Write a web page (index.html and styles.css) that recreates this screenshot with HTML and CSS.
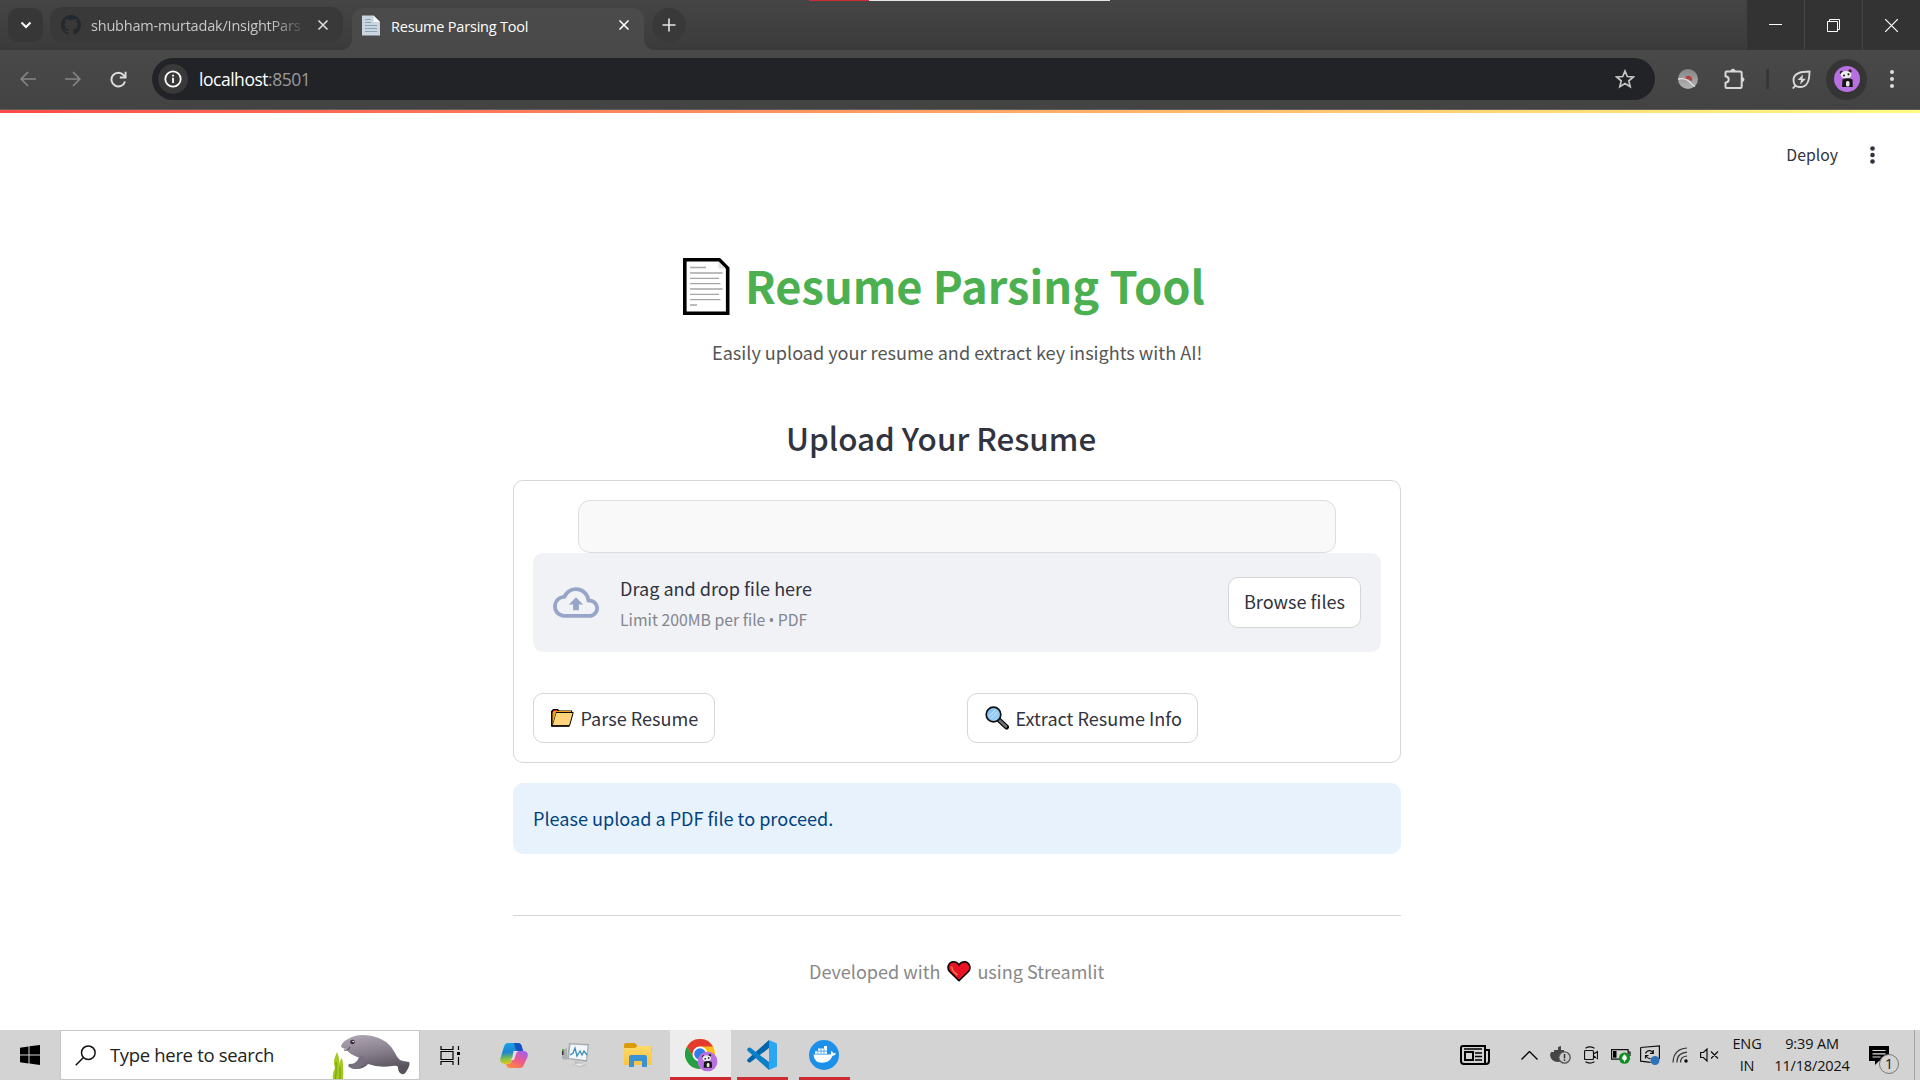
FILE: index.html
```html
<!DOCTYPE html>
<html lang="en">
<head>
<meta charset="utf-8">
<title>Resume Parsing Tool</title>
<link rel="stylesheet" href="styles.css">
</head>
<body>
<svg class="defs" width="0" height="0">
  <defs>
    <linearGradient id="lens" x1="0" y1="0" x2="1" y2="1"><stop offset="0" stop-color="#7cc0f0"/><stop offset="1" stop-color="#a5d4f7"/></linearGradient>
    <linearGradient id="body" x1="0" y1="0" x2="0.3" y2="1"><stop offset="0" stop-color="#b3a9b8"/><stop offset="0.5" stop-color="#8b8290"/><stop offset="1" stop-color="#57525c"/></linearGradient>
    <linearGradient id="cpa" x1="0.2" y1="0" x2="0.3" y2="1"><stop offset="0" stop-color="#1aa2e8"/><stop offset="0.45" stop-color="#1c86cf"/><stop offset="0.75" stop-color="#7fc24a"/><stop offset="1" stop-color="#e9c51e"/></linearGradient>
    <linearGradient id="cpb" x1="0.8" y1="0" x2="0.2" y2="1"><stop offset="0" stop-color="#a45ff0"/><stop offset="0.5" stop-color="#ee5a8c"/><stop offset="1" stop-color="#ff8a3c"/></linearGradient>
    <linearGradient id="fold" x1="0" y1="0" x2="0" y2="1"><stop offset="0" stop-color="#ffd96a"/><stop offset="1" stop-color="#fcc43e"/></linearGradient>
    <linearGradient id="ball" x1="0" y1="0" x2="0" y2="1"><stop offset="0" stop-color="#858585"/><stop offset="1" stop-color="#b5b5b5"/></linearGradient>
    <symbol id="panda" viewBox="0 0 26 26">
      <circle cx="13" cy="13" r="13" fill="#b770e0"/>
      <circle cx="7.500" cy="6.500" r="1.700" fill="#222"/><circle cx="16" cy="5" r="1.700" fill="#222"/>
      <ellipse cx="12" cy="8.800" rx="5.400" ry="3.900" fill="#ececec"/>
      <circle cx="10" cy="9.500" r="1.100" fill="#222"/><circle cx="14.500" cy="8.300" r="1.100" fill="#222"/>
      <path d="M8.500 13.500q5-2.500 10 0l.3 7.500H8z" fill="#161616"/>
      <rect x="12" y="15" width="3.500" height="5.500" rx="1.500" fill="#e8e8e8"/>
    </symbol>
  </defs>
</svg>

<header class="tabstrip">
  <div class="top-progress"></div>
  <button class="tab-search"><svg width="12" height="8" viewBox="0 0 12 8"><path d="M1.500 1.500L6 6l4.500-4.500" fill="none" stroke="#fff" stroke-width="2"/></svg></button>
  <div class="tab tab-idle">
    <svg width="20" height="20" viewBox="0 0 16 16"><path fill="#24292e" d="M8 0C3.580 0 0 3.580 0 8c0 3.540 2.290 6.530 5.470 7.590.4.070.55-.17.55-.38 0-.19-.01-.82-.01-1.490-2.010.37-2.530-.49-2.690-.94-.09-.23-.48-.94-.82-1.130-.28-.15-.68-.52-.01-.53.63-.01 1.080.58 1.230.82.72 1.210 1.870.87 2.330.66.07-.52.28-.87.51-1.070-1.780-.2-3.640-.89-3.640-3.950 0-.87.31-1.590.82-2.150-.08-.2-.36-1.020.08-2.120 0 0 .67-.21 2.200.82a7.600 7.600 0 0 1 4 0c1.530-1.040 2.200-.82 2.200-.82.44 1.100.16 1.920.08 2.120.51.56.82 1.270.82 2.150 0 3.070-1.870 3.750-3.650 3.950.29.25.54.73.54 1.480 0 1.070-.01 1.930-.01 2.200 0 .21.15.46.55.38A8.010 8.010 0 0 0 16 8c0-4.420-3.580-8-8-8z"/></svg>
    <span class="tab-title">shubham-murtadak/InsightPars</span>
    <svg class="tab-close" width="12" height="12" viewBox="0 0 12 12"><path d="M1.500 1.500l9 9M10.500 1.500l-9 9" stroke="#ddd" stroke-width="1.600"/></svg>
  </div>
  <div class="tab tab-active">
    <svg width="18" height="21" viewBox="0 0 18 21"><path d="M0 .5h11.500L18 7v13.500H0z" fill="#c9d5e0"/><path d="M11.500.5V7H18z" fill="#f4f8fb"/><path d="M3 4.500h6M3 7.500h6M3 10.500h12M3 13.500h12M3 16.500h12" stroke="#8fa2b3" stroke-width="1.200"/></svg>
    <span class="tab-title">Resume Parsing Tool</span>
    <svg class="tab-close" width="12" height="12" viewBox="0 0 12 12"><path d="M1.500 1.500l9 9M10.500 1.500l-9 9" stroke="#fff" stroke-width="1.600"/></svg>
  </div>
  <button class="new-tab"><svg width="14" height="14" viewBox="0 0 14 14"><path d="M7 .5v13M.5 7h13" stroke="#e6e6e6" stroke-width="1.600"/></svg></button>
  <div class="window-controls">
    <span><svg width="13" height="13" viewBox="0 0 13 13"><path d="M0 5.500h13" stroke="#fff"/></svg></span>
    <span><svg width="13" height="13" viewBox="0 0 13 13"><path d="M.5 2.500h10v10H.5zM2.500 2.500v-2h10v10h-2" fill="none" stroke="#fff"/></svg></span>
    <span><svg width="13" height="13" viewBox="0 0 13 13"><path d="M0 0l13 13M13 0L0 13" stroke="#fff" stroke-width="1.200"/></svg></span>
  </div>
</header>

<nav class="toolbar">
  <svg class="nav-back" width="16" height="16" viewBox="0 0 16 16"><path d="M8 1L1.200 8 8 15M1.500 8H16" fill="none" stroke="#858585" stroke-width="1.700"/></svg>
  <svg class="nav-next" width="16" height="16" viewBox="0 0 16 16"><path d="M8 1l6.800 7L8 15M14.500 8H0" fill="none" stroke="#858585" stroke-width="1.700"/></svg>
  <svg class="nav-reload" width="17" height="17" viewBox="0 0 17 17"><path d="M15 10.500A6.900 6.900 0 1 1 13.800 4.300L15.500 6.500" fill="none" stroke="#ddd" stroke-width="2"/><path d="M16.500.8v6.700H9.800V5.600h4.800V.8z" fill="#ddd"/></svg>
  <div class="omnibox">
    <span class="site-info"><svg width="18" height="18" viewBox="0 0 18 18"><circle cx="9" cy="9" r="7.700" fill="none" stroke="#fff" stroke-width="1.800"/><path d="M9 7.800v5.200M9 4.700v1.900" stroke="#fff" stroke-width="1.800"/></svg></span>
    <span class="url">localhost<span class="port">:8501</span></span>
    <svg class="star" width="20" height="20" viewBox="0 0 20 20"><path d="M10 2l2.300 5.500 6 .5-4.500 3.900 1.400 5.800L10 14.600l-5.200 3.100 1.400-5.800L1.700 8l6-.5z" fill="none" stroke="#c7c7c7" stroke-width="1.700"/></svg>
  </div>
  <svg class="ext" width="20" height="20" viewBox="0 0 20 20"><circle cx="10" cy="10" r="10" fill="url(#ball)"/><path d="M7 9.500a3.600 3.600 0 1 1 6.500 2.800q-3-2.500-6.500-2.800z" fill="#b9413d"/><path d="M0 10q7-1.500 10.500 2T17 17.500" fill="none" stroke="#e2e2e2" stroke-width="1.300"/></svg>
  <svg class="puzzle" width="22" height="22" viewBox="0 0 22 22"><path d="M2.500 4.800Q2.500 3.500 3.700 3.500H17q1.700 0 1.700 1.700v13q0 1.800-1.700 1.800H3.700q-1.200 0-1.200-1.200v-4q3.200-.5 3.200-3.300T2.500 8.300z" fill="none" stroke="#d8d8d8" stroke-width="2"/><path d="M7.500 3.300a2.500 2.500 0 0 1 5 0zM19 9a2.500 2.500 0 0 1 0 5z" fill="#d8d8d8"/></svg>
  <span class="tool-sep"></span>
  <svg class="leaf" width="19" height="19" viewBox="0 0 19 19"><path d="M17.500 1.500C8 1.500 1.500 3.500 1.500 10q0 7 6.500 7c7 0 9.500-5 9.500-15.500z" fill="none" stroke="#d8d8d8" stroke-width="1.900"/><path d="M.8 18.500L4 14.800" stroke="#d8d8d8" stroke-width="1.900"/><path d="M11 4.500L5.500 10H9l-1 4.500L14 8.800h-3.500z" fill="#d8d8d8"/></svg>
  <span class="avatar"><svg width="26" height="26"><use href="#panda"/></svg></span>
  <svg class="menu" width="4" height="18" viewBox="0 0 4 18"><g fill="#ddd"><circle cx="2" cy="2" r="2"/><circle cx="2" cy="9" r="2"/><circle cx="2" cy="16" r="2"/></g></svg>
</nav>

<main class="app">
  <div class="decoration"></div>
  <div class="app-header">
    <span class="deploy">Deploy</span>
    <svg width="5" height="18" viewBox="0 0 5 18"><g fill="#31333f"><circle cx="2.500" cy="2.500" r="2.300"/><circle cx="2.500" cy="9" r="2.300"/><circle cx="2.500" cy="15.500" r="2.300"/></g></svg>
  </div>
  <section class="content">
    <h1 class="title">
      <svg width="47" height="57" viewBox="0 0 47 57"><path d="M1.800 1.800h34.500l8.400 8.500v44.900H1.800z" fill="#fff" stroke="#000" stroke-width="3.600"/><path d="M35.500 3.500v7h7.400z" fill="#e4e4e4"/><path d="M7 9.500h16M7 15h32.500M7 20.300h29M7 25.600h30.500M7 31h32.500M7 36.300h29M7 41.700h30.500M7 47h7" stroke="#a6a6a6" stroke-width="1.300"/></svg>
      <span>Resume Parsing Tool</span>
    </h1>
    <p class="subtitle">Easily upload your resume and extract key insights with AI!</p>
    <h2 class="heading">Upload Your Resume</h2>
    <div class="form">
      <div class="upload-box"></div>
      <div class="dropzone">
        <svg width="46" height="31" viewBox="0 0 24 16"><path fill="#97a6c8" d="M19.350 6.040A7.490 7.490 0 0 0 12 0C9.110 0 6.600 1.640 5.350 4.040A5.994 5.994 0 0 0 0 10c0 3.310 2.690 6 6 6h13c2.760 0 5-2.240 5-5 0-2.640-2.050-4.780-4.650-4.960zM19 14H6c-2.210 0-4-1.790-4-4 0-2.050 1.530-3.760 3.560-3.970l1.070-.11.5-.95A5.469 5.469 0 0 1 12 2c2.620 0 4.880 1.860 5.390 4.430l.3 1.500 1.530.11A2.980 2.980 0 0 1 22 11c0 1.650-1.350 3-3 3z"/><path fill="#97a6c8" d="M8.300 9h2.200v3h3V9h2.200L12 5.200z"/></svg>
        <div class="drop-text"><span class="drop-title">Drag and drop file here</span><span class="drop-limit">Limit 200MB per file <span class="bullet">•</span> PDF</span></div>
        <button class="btn browse"><span>Browse files</span></button>
      </div>
      <div class="actions">
        <div><button class="btn"><svg width="23" height="18" viewBox="0 0 23 18"><path d="M1 17V2l1.500-1.500h4L8 2h12.500v2" fill="#e81224" stroke="#000" stroke-width="1.200"/><path d="M1 17V4l2-2h17v3z" fill="#f2a117"/><path d="M1 17L5 3.500h17.200L18.500 16.800z" fill="#ffd37a" stroke="#000" stroke-width="1"/><path d="M1 17V3.500L5 3.500z" fill="#f2a117"/><path d="M.8 2v15h17.500" fill="none" stroke="#000" stroke-width="1.400"/></svg><span class="parse">Parse Resume</span></button></div>
        <div><button class="btn"><svg width="24" height="24" viewBox="0 0 24 24"><path d="M14 14l7.500 7" stroke="#000" stroke-width="5" stroke-linecap="round"/><path d="M14.500 14.500l6.500 6" stroke="#6d7377" stroke-width="2.600" stroke-linecap="round"/><circle cx="8.500" cy="8.500" r="7.300" fill="url(#lens)" stroke="#111" stroke-width="1.700"/><path d="M4 10.500L10.500 3.500M6 12.500l6-6.500" stroke="#cbe7fb" stroke-width="1"/></svg><span class="extract">Extract Resume Info</span></button></div>
      </div>
    </div>
    <div class="alert"><span>Please upload a PDF file to proceed.</span></div>
    <footer class="credits"><span class="credit-a">Developed with</span><svg width="24" height="21" viewBox="0 0 24 21"><path d="M12 19.800L2.500 10.500C-.8 6.500 2 .8 6.500.8 9.500.8 11 2.200 12 4 13 2.200 14.500.8 17.500.8 22 .8 24.800 6.500 21.500 10.500z" fill="#e81224" stroke="#000" stroke-width="1.500"/><path d="M4.500 5.500q.5 5 6 8.500" fill="none" stroke="#f3704f" stroke-width="1.800"/></svg><span class="credit-b">using Streamlit</span></footer>
  </section>
</main>

<div class="taskbar">
  <span class="start"><svg width="20" height="20" viewBox="0 0 20 20"><path d="M0 2.700l8.500-1.200v8H0zM9.500 1.300L20 0v9.500H9.500zM0 10.500h8.500v8L0 17.300zM9.500 10.500H20V20L9.500 18.600z"/></svg></span>
  <div class="search">
    <svg width="21" height="21" viewBox="0 0 21 21"><circle cx="13.300" cy="7.700" r="6.800" fill="none" stroke="#111" stroke-width="1.500"/><path d="M8.500 12.500L.7 20.300" stroke="#111" stroke-width="1.500"/></svg>
    <span class="search-text">Type here to search</span>
    <svg class="manatee" width="78" height="46" viewBox="0 0 78 46"><path d="M1 46q-1-7 2-12-2-6 0-11l2-5q3 6 2 14 1-7 3-8 2 8 1 22z" fill="#a3c91f"/><path d="M3.500 46q1-8 .5-18M8 46V33" stroke="#6f9c18" fill="none"/><path d="M9 12Q11 7 16 5 25-1 40 2 56 5 63 19q3 7 8 8l6 1q2 2-3 10-2 3-4 2-4-1-4-7-1-2-6-1Q47 34 36 30q-4 5-12 5-5 0-8-3l1-2q8 0 11-6-10-3-14-9-5-1-5-3z" fill="url(#body)"/><path d="M17 31q8-1 10-8 4-2 7 1-1 8-10 11-5 0-7-4z" fill="#77707d"/><circle cx="20.500" cy="8" r="2.300" fill="#3a2f36"/><circle cx="21.200" cy="7.500" r=".8" fill="#fff"/><path d="M12 16q5 1 6-3" fill="none" stroke="#4d4853"/></svg>
  </div>
  <svg class="tb-view" width="20" height="19" viewBox="0 0 20 19"><path d="M1 0v3.500h12V0M1 19v-3.500h12V19M1 5.500h12v8H1zM18.500 0v4M18.500 11v8" fill="none" stroke="#000" stroke-width="1.200"/><path d="M17 6h3v3h-3z"/></svg>
  <svg class="tb-copilot" width="28" height="27" viewBox="0 0 28 27"><path d="M8 1h10q3 0 4 4l1 4h-5q-3 0-4 4l-2 6q-1 3-4 3H4q-5-1-3.500-6L4 4.500Q5 1 8 1z" fill="url(#cpa)"/><path d="M14 1h4q3 0 4 4l1 4h-5q-2 0-3-4z" fill="#1552c2"/><path d="M20 26H10q-3 0-4-4h2q3 0 4-3l2-6q1-4 4-4h6q5 1 3.500 6L24 22.500q-1 3.500-4 3.500z" fill="url(#cpb)"/><path d="M13.500 9h5q-2 1-2.500 3l-2 6H10q2-1 2.500-3z" fill="#e8dcec"/></svg>
  <svg class="tb-monitor" width="28" height="26" viewBox="0 0 28 26"><path d="M1 8l5-2v12l-5-1z" fill="#aeb1b3"/><path d="M1 7h2v2H1z" fill="#58b52d"/><path d="M1 9h1.500v4H1z" fill="#333"/><path d="M8 1l20 1-2 18-20-3z" fill="#a9adaf"/><path d="M9.500 2.500l17 1-1.500 14.500-17-2z" fill="#f1f7fb"/><path d="M9 13l3-2 2-5 2 8 3-5 2 4 2-4 3 4" fill="none" stroke="#3f8db5" stroke-width="1.300"/><path d="M13 19l7 1v1.500l6 1.500-6 2.500-9-2.500 3-1.500z" fill="#bfc2c4"/><path d="M13 22.500l6 1.500 4-1.200-5-1.300z" fill="#e6e7e8"/></svg>
  <svg class="tb-folder" width="28" height="24" viewBox="0 0 28 24"><path d="M0 2q0-2 2-2h9l2.500 3H26q1.500 0 1.500 2v5H0z" fill="#dd9a08"/><path d="M0 5h11l2.500-2H26q1.500 0 1.500 1.500V22H0z" fill="url(#fold)"/><path d="M5 24V14q0-2 2-2h14q2 0 2 2v10h-5v-6h-8v6z" fill="#3b93d3"/></svg>
  <span class="task task-chrome"><svg width="33" height="33" viewBox="0 0 33 33"><circle cx="15" cy="15" r="15" fill="#fbc116"/><path d="M2 7.500A15 15 0 0 1 28 7.500H15l-6.500 11z" fill="#e33b2e"/><path d="M2 7.500A15 15 0 0 0 15 30l6.500-11.200H8.500z" fill="#22a045"/><circle cx="15" cy="15" r="7.500" fill="#fff"/><circle cx="15" cy="15" r="5.800" fill="#2f7de9"/><use href="#panda" x="12.500" y="12.500" width="20" height="20"/></svg></span>
  <span class="task task-code"><svg width="30" height="30" viewBox="0 0 30 30"><path d="M22 0v8L3.500 22.300Q2 23 .8 21.800-.5 20.500.8 19z" fill="#0065a9"/><path d="M22 30v-8L3.500 7.700Q2 7 .8 8.200-.5 9.500.8 11z" fill="#0a7fc8"/><path d="M22 0l8 3.500v23L22 30z" fill="#2aa6f2"/></svg></span>
  <span class="task task-docker"><svg width="30" height="30" viewBox="0 0 30 30"><circle cx="15" cy="15" r="15" fill="#1d91ea"/><path d="M4.500 14.500h17q1-1 .5-3.500 2 .5 2.300 2.200 1.700-.3 2.700.5-1 2-3.500 2-2.500 7-10.500 7-8 0-8.500-8.200z" fill="#fff"/><path d="M6 11.200h12v2.600H6zM9 8.500h9v2.500H9zM15 6h3v2.500h-3z" fill="#fff"/><path d="M8.900 11v3M12 8.500V14M15 8.500V14M9 11h9" stroke="#1d91ea" stroke-width=".6"/></svg></span>
  <div class="tray">
    <svg class="tr-news" width="30" height="20" viewBox="0 0 30 20"><path d="M3 1h22v18H4q-3 0-3-3V3q0-2 2-2zM25 5h4v11q0 3-3 3h-3" fill="none" stroke="#000" stroke-width="2"/><path d="M5 7h8v8H5z" fill="none" stroke="#000" stroke-width="2"/><path d="M4 4h18M15 8h7M15 11.500h7M15 15h7" stroke="#000" stroke-width="1.500"/></svg>
    <svg class="tr-up" width="17" height="9" viewBox="0 0 17 9"><path d="M.5 8.500l8-8 8 8" fill="none" stroke="#000" stroke-width="1.300"/></svg>
    <svg class="tr-whale" width="21" height="18" viewBox="0 0 21 18"><path d="M0 9l1-3h3V4h4V1l3-1v4h3v3l4 1q-3 8-10 8-7 0-8-7z" fill="#454545"/><circle cx="14.500" cy="11.500" r="5.700" fill="#c9c9c9" stroke="#555" stroke-width="1.300"/><path d="M14.500 8v4.500M14.500 13.500v1.500" stroke="#333" stroke-width="1.500"/></svg>
    <svg class="tr-cam" width="14" height="18" viewBox="0 0 14 18"><path d="M1.500 4.500h7q1 0 1 1v7q0 1-1 1h-7q-1 0-1-1v-7q0-1 1-1zM9.500 8l4-2.500v7l-4-2.500M1.500 2.200q4-2.500 9 0M1.500 15.800q4 2.500 9 0" fill="none" stroke="#111" stroke-width="1.200"/></svg>
    <svg class="tr-batt" width="20" height="18" viewBox="0 0 20 18"><path d="M.6 3.600h16.500v9.500H.6zM17.500 6h1.500v4" fill="none" stroke="#111" stroke-width="1.200"/><path d="M2 5h3.500v6.700H2z"/><circle cx="13.500" cy="12.200" r="5.600" fill="#0e8f22"/><path d="M13.500 8.700q3 2.500 1.500 5h-3q-1.500-2.500 1.500-5zM13.500 11v5" fill="#fff" stroke="#fff" stroke-width=".8"/></svg>
    <svg class="tr-sync" width="20" height="20" viewBox="0 0 20 20"><path d="M.6 2.500L19.400.8V14M.6 2.500v13.700l10 1.200" fill="none" stroke="#111" stroke-width="1.200"/><path d="M5.500 8.500q1.500-3 4.500-2.800 2 .3 3 2M13.300 5v3.300H10M5.500 13.500v-3h3M6 11q2 3 4.500 2.500" fill="none" stroke="#111" stroke-width="1.200"/><circle cx="15" cy="15.500" r="4.500" fill="#2f72ba"/></svg>
    <svg class="tr-wifi" width="16" height="16" viewBox="0 0 16 16"><circle cx="14" cy="14" r="1.700"/><path d="M8.500 15.500q0-6 6.500-6.500M4.800 15.500Q5 6 15 5.200M1 15.500Q1.500 2 15 1" fill="none" stroke="#333" stroke-width="1.200"/></svg>
    <svg class="tr-mute" width="19" height="14" viewBox="0 0 19 14"><path d="M.6 4.500h2.800L7 1v12L3.400 9.500H.6zM11 3.500l7 7M18 3.500l-7 7" fill="none" stroke="#111" stroke-width="1.200"/></svg>
    <div class="lang"><span>ENG</span><span>IN</span></div>
    <div class="clock"><span>9:39 AM</span><span>11/18/2024</span></div>
    <span class="notify"><svg width="20" height="19" viewBox="0 0 20 19"><path d="M0 0h20v15H10l-4 4v-4H0z"/><path d="M3.500 4.500h13M3.500 7.800h13M3.500 11h8" stroke="#ddd" stroke-width="1.200"/></svg><b class="badge">1</b></span>
    <span class="peek"></span>
  </div>
</div>
</body>
</html>
```
FILE: styles.css
```css
* { box-sizing: border-box; }
body {
  margin: 0; width: 1920px; height: 1080px; overflow: hidden;
  display: flex; flex-direction: column; background: #fff;
  font-family: "Noto Sans CJK SC", "Open Sans", sans-serif;
}
.defs { position: absolute; }
svg { display: block; flex: none; }
span, p, h1, h2 { white-space: nowrap; }
button { border: 0; padding: 0; font: inherit; background: none; }

/* browser chrome */
.tabstrip {
  position: relative; height: 50px; flex: none; display: flex; align-items: flex-start;
  background: linear-gradient(#454545, #3b3b3b);
  font-family: "Open Sans", sans-serif; font-size: 14.500px;
}
.top-progress { position: absolute; left: 809px; top: 0; width: 301px; height: 1px; background: linear-gradient(90deg, #cc2b2f 60px, #e5e5e5 60px); }
.tab-search { margin: 8px 0 0 8px; width: 35px; height: 34px; border-radius: 11px; background: #373737; display: grid; place-items: center; }
.tab { display: flex; align-items: center; }
.tab-title { padding-top: 2px; }
.tab-idle { margin: 7px 0 0 7px; width: 293px; height: 35px; border-radius: 12px; background: #393939; padding-left: 11px; color: #c8c8c8; }
.tab-idle .tab-title { margin-left: 10px; width: 212px; letter-spacing: -.2px; -webkit-mask-image: linear-gradient(90deg, #000 180px, transparent 216px); mask-image: linear-gradient(90deg, #000 180px, transparent 216px); }
.tab-idle .tab-close { margin-left: 14px; }
.tab-active { position: relative; margin: 8px 0 0 9px; width: 292px; height: 42px; border-radius: 12px 12px 0 0; background: linear-gradient(#4b4b4b, #494949); padding: 0 0 8px 10px; color: #fff; }
.tab-active::before, .tab-active::after { content: ""; position: absolute; bottom: 0; width: 10px; height: 10px; }
.tab-active::before { left: -10px; background: radial-gradient(circle at 0 0, transparent 9.500px, #494949 10px); }
.tab-active::after { right: -10px; background: radial-gradient(circle at 100% 0, transparent 9.500px, #494949 10px); }
.tab-active .tab-title { margin-left: 11px; width: 227px; letter-spacing: -.2px; }
.new-tab { margin: 8px 0 0 8px; width: 34px; height: 34px; border-radius: 50%; background: #393939; display: grid; place-items: center; }
.window-controls { margin-left: auto; display: flex; gap: 1px; height: 50px; width: 173px; background: #454545; }
.window-controls span { flex: 1; background: #333; display: grid; place-items: center; }

.toolbar { height: 60px; flex: none; display: flex; align-items: center; padding-bottom: 1px; background: linear-gradient(#494949, #434343); border-bottom: 1px solid #5c5c5c; font-family: "Open Sans", sans-serif; }
.nav-back { margin-left: 20px; }
.nav-next { margin-left: 29px; }
.nav-reload { margin-left: 29px; }
.omnibox { margin-left: 25px; width: 1503px; height: 42px; border-radius: 21px; background: #222327; display: flex; align-items: center; padding-left: 6px; }
.site-info { width: 30px; height: 30px; border-radius: 50%; background: #393939; display: grid; place-items: center; }
.url { margin-left: 11px; font-size: 17.500px; letter-spacing: -.47px; color: #fff; flex: 1; }
.port { color: #9a9a9a; }
.star { margin-right: 20px; }
.ext { margin-left: 23px; }
.puzzle { margin-left: 25px; }
.tool-sep { margin-left: 21px; width: 3px; height: 20px; background: #373737; }
.leaf { margin-left: 23px; }
.avatar { margin-left: 15px; width: 41px; height: 41px; border-radius: 50%; background: #353535; display: grid; place-items: center; }
.menu { margin-left: 23px; }

/* app */
.app { flex: 1; display: flex; flex-direction: column; color: #31333f; }
.decoration { height: 3px; background: linear-gradient(90deg, #ff4b4b, #fffd80); }
.app-header { height: 84px; display: flex; align-items: center; justify-content: flex-end; padding-right: 45px; gap: 32px; }
.deploy { font-size: 15.800px; padding-bottom: 1px; }
.content { width: 888px; margin: 0 auto; transform: translateX(-3px); display: flex; flex-direction: column; }
.title { margin: 61px 0 0 170px; height: 57px; display: flex; align-items: center; gap: 15px; font-size: 45.200px; font-weight: 700; color: #4caf50; line-height: 57px; }
.title span { padding-bottom: 5px; }
.subtitle { margin: 21px 0 0 199px; font-size: 18.080px; line-height: 32px; color: #555; }
.heading { margin: 45px 0 0 273px; font-size: 31.400px; line-height: 50px; font-weight: 500; }
.form { margin-top: 17px; height: 283px; border: 1px solid #d6d6d9; border-radius: 10px; padding: 19px; }
.upload-box { margin: 0 auto; width: 758px; height: 53px; border: 1px solid #ddd; border-radius: 12px; background: #f9f9f9; }
.dropzone { height: 99px; border-radius: 10px; background: #f0f2f6; display: flex; align-items: center; padding: 0 20px; }
.drop-text { margin-left: 21px; padding-top: 3px; flex: 1; display: flex; flex-direction: column; }
.drop-title { font-size: 18.080px; line-height: 32px; }
.drop-limit { font-size: 15.800px; line-height: 32px; color: #84868e; }
.bullet { font-family: "Open Sans", sans-serif; font-size: 15.500px; line-height: 1; margin: 0 -.3px; }
.btn { height: 50px; border: 1px solid #d6d6d9; border-radius: 10px; background: #fff; color: #31333f; font-size: 18.080px; line-height: 48px; padding: 0 15.500px 1px 17px; display: flex; align-items: center; gap: 6.500px; }
.browse { height: 51px; padding: 0 15px 3px; }
.actions { margin-top: 41px; display: grid; grid-template-columns: 1fr 1fr; gap: 20px; }
.actions .btn { width: fit-content; }
.alert { margin-top: 20px; height: 71px; border-radius: 10px; background: #e8f2fc; color: #004280; padding: 0 0 1px 20px; display: flex; align-items: center; font-size: 18.080px; }
.credits { margin-top: 61px; border-top: 1px solid #d6d6d9; padding: 39px 0 0 296px; display: flex; align-items: center; font-size: 18.050px; line-height: 32px; color: #888; }
.credit-a { margin-right: 7px; }
.credit-b { margin-left: 6px; }
.credits svg { margin-top: 1px; }

/* taskbar */
.taskbar { height: 50px; flex: none; background: #d3d3d3; display: flex; align-items: center; font-family: "Open Sans", sans-serif; color: #111; }
.start { width: 60px; display: grid; place-items: center; }
.search { width: 360px; height: 50px; background: #fff; border: 1px solid #c6c6c6; display: flex; align-items: center; padding-left: 14px; overflow: hidden; }
.search-text { margin-left: 14px; padding-bottom: 2px; font-size: 18.500px; width: 222px; color: #222; letter-spacing: -.33px; }
.manatee { margin-top: 4px; }
.tb-view { margin-left: 20px; }
.tb-copilot { margin-left: 40px; }
.tb-monitor { margin-left: 33px; }
.tb-folder { margin-left: 35px; }
.task { height: 50px; border-bottom: 3px solid #cc2b30; display: grid; place-items: center; padding-top: 2px; }
.task-chrome { margin-left: 18px; width: 61px; background: #ededed; padding: 4px 0 0 2px; }
.task-code { margin-left: 6px; width: 51px; padding-right: 1px; }
.task-docker { margin-left: 11px; width: 51px; padding-right: 2px; }
.tray { margin-left: auto; height: 50px; display: flex; align-items: center; }
.tr-up { margin-left: 31px; }
.tr-whale { margin-left: 12px; }
.tr-cam { margin-left: 13px; }
.tr-batt { margin-left: 13px; }
.tr-sync { margin-left: 9px; }
.tr-wifi { margin-left: 12px; }
.tr-mute { margin-left: 12px; }
.lang, .clock { display: flex; flex-direction: column; align-items: center; font-size: 14.500px; line-height: 22.500px; letter-spacing: -.15px; }
.lang { margin-left: 12px; width: 32px; }
.clock { margin-left: 10px; width: 78px; }
.notify { margin-left: 18px; width: 30px; position: relative; }
.badge { position: absolute; left: 10px; top: 8px; width: 20px; height: 20px; border: 1px solid #777; border-radius: 50%; background: #d3d3d3; font-size: 14px; line-height: 18px; text-align: center; font-weight: 400; }
.peek { margin-left: 15px; width: 6px; height: 50px; border-left: 1px solid #a5a5a5; }
```
